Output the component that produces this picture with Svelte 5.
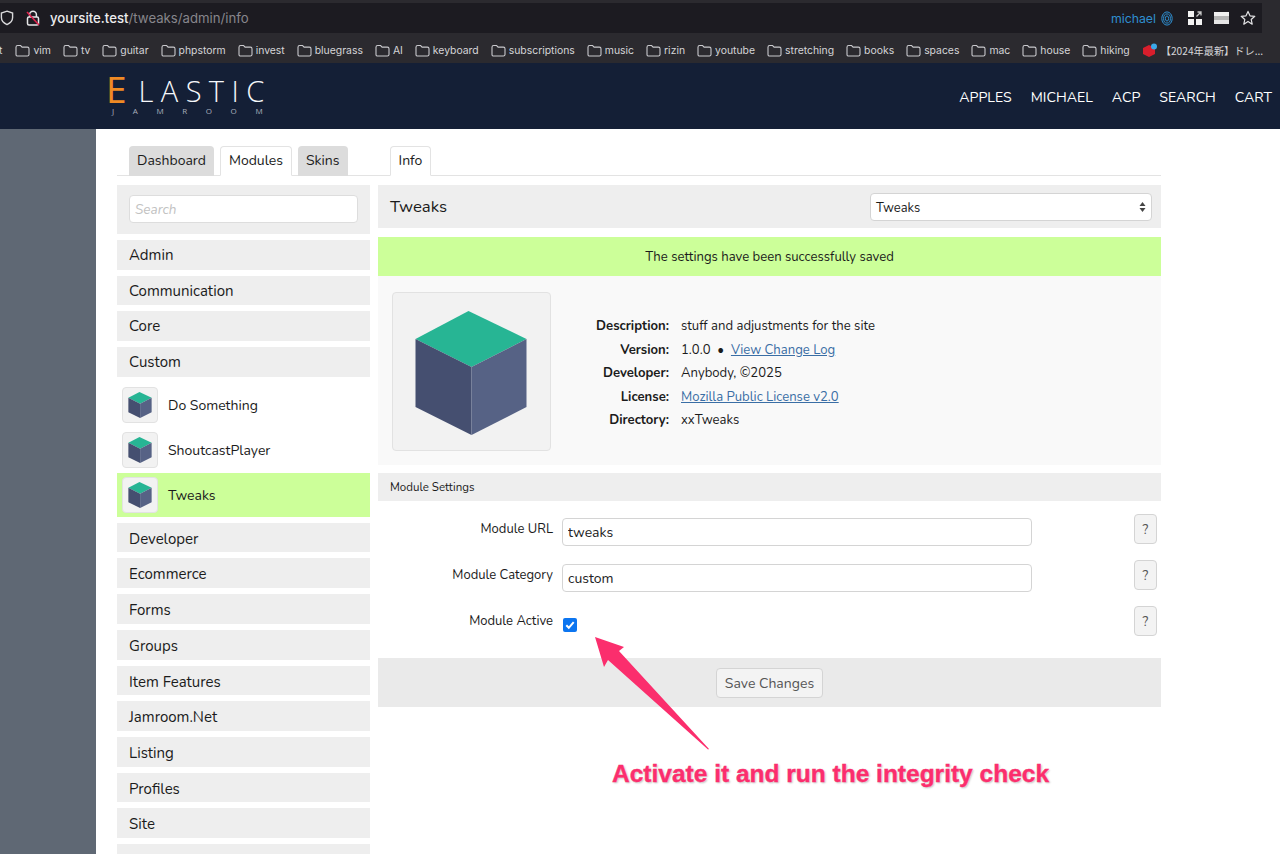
<script lang="ts">
  const bookmarks = ['vim', 'tv', 'guitar', 'phpstorm', 'invest', 'bluegrass', 'AI', 'keyboard', 'subscriptions', 'music', 'rizin', 'youtube', 'stretching', 'books', 'spaces', 'mac', 'house', 'hiking'];
  const nav = ['APPLES', 'MICHAEL', 'ACP', 'SEARCH', 'CART'];
  const groupsTop = ['Admin', 'Communication', 'Core', 'Custom'];
  const modules = [
    { label: 'Do Something', active: false },
    { label: 'ShoutcastPlayer', active: false },
    { label: 'Tweaks', active: true },
  ];
  const groupsBottom = ['Developer', 'Ecommerce', 'Forms', 'Groups', 'Item Features', 'Jamroom.Net', 'Listing', 'Profiles', 'Site', ''];
</script>

{#snippet cube(size: number)}
  <svg width={size} height={size} viewBox="0 0 111 124" aria-hidden="true">
    <polygon points="0,28 53,0 111,28 56,56" fill="#27b594" />
    <polygon points="0,28 56,56 56,124 0,96" fill="#454f70" />
    <polygon points="56,56 111,28 111,96 56,124" fill="#566285" />
  </svg>
{/snippet}

{#snippet folder()}
  <svg class="folder" width="15" height="13" viewBox="0 0 15 13" aria-hidden="true">
    <path d="M1 3.200c0-1 .6-1.700 1.600-1.700h3l1.500 1.600h5.300c1 0 1.600.6 1.600 1.600v5.700c0 1-.6 1.600-1.600 1.600H2.600c-1 0-1.600-.6-1.600-1.600z" fill="none" stroke="#c9c9cd" stroke-width="1.100" />
  </svg>
{/snippet}

<div class="page">
  <div class="addressbar">
    <div class="urlfield">
      <svg class="shield" width="14" height="16" viewBox="0 0 14 16" aria-hidden="true">
        <path d="M7 1.200 12.600 3v4.600c0 3.200-2.400 5.600-5.600 7-3.200-1.400-5.600-3.800-5.600-7V3z" fill="none" stroke="#d8d8da" stroke-width="1.400" />
      </svg>
      <svg class="lock" width="14" height="16" viewBox="0 0 14 16" aria-hidden="true">
        <path d="M3.600 7V4.600a3.400 3.400 0 0 1 6.800 0V7" fill="none" stroke="#e6e6e8" stroke-width="1.500" />
        <rect x="1.500" y="7" width="11" height="8" rx="1.500" fill="none" stroke="#e6e6e8" stroke-width="1.500" />
        <path d="M1 2 13 15" stroke="#e0224e" stroke-width="1.600" />
      </svg>
      <span class="url"><b>yoursite.test</b>/tweaks/admin/info</span>
      <span class="spacer"></span>
      <span class="ext-user">michael</span>
      <svg width="12" height="15" viewBox="0 0 12 15" aria-hidden="true" class="finger">
        <g fill="none" stroke="#2f8fd0" stroke-width="1">
          <ellipse cx="6" cy="7.500" rx="5.200" ry="6.600" />
          <ellipse cx="6" cy="7.500" rx="3.400" ry="4.600" />
          <ellipse cx="6" cy="7.500" rx="1.600" ry="2.600" />
        </g>
      </svg>
      <svg class="qr" width="14" height="14" viewBox="0 0 14 14" aria-hidden="true">
        <rect x="0" y="0" width="6" height="6" fill="#f2f2f2" />
        <rect x="0" y="8" width="6" height="6" fill="#f2f2f2" />
        <rect x="8" y="8" width="6" height="6" fill="#f2f2f2" />
        <path d="M8.500 5.500 13 1M9.500 1H13v3.500" fill="none" stroke="#c8c8c8" stroke-width="1.300" />
      </svg>
      <span class="bars"></span>
      <svg class="star" width="16" height="16" viewBox="0 0 16 16" aria-hidden="true">
        <path d="m8 1.400 2 4.400 4.800.5-3.600 3.200 1 4.700L8 11.400l-4.200 2.800 1-4.700L1.200 6.300 6 5.800z" fill="none" stroke="#e4e4e6" stroke-width="1.200" stroke-linejoin="round" />
      </svg>
    </div>
  </div>

  <div class="bookmarks">
    <span class="cut">t</span>
    {#each bookmarks as b}
      <span class="bm">{@render folder()}{b}</span>
    {/each}
    <span class="bm last">
      <svg width="15" height="15" viewBox="0 0 15 15" aria-hidden="true">
        <polygon points="1,5 7,2 13,5 13,11 7,14 1,11" fill="#d81e2c" />
        <circle cx="12" cy="3.500" r="3" fill="#3aa8e8" />
      </svg>
      <span class="jp">【2024年最新】ドレ...</span>
    </span>
  </div>

  <header class="site">
    <div class="logo">
      <div class="logo-main"><span class="e">E</span><span class="rest">LASTIC</span></div>
      <div class="logo-sub">JAMROOM</div>
    </div>
    <nav>
      {#each nav as n}<span>{n}</span>{/each}
    </nav>
  </header>

  <div class="body">
    <aside class="gutter"></aside>
    <main class="content">
      <div class="tabs">
        <div class="tabgroup">
          <span class="tab">Dashboard</span>
          <span class="tab on">Modules</span>
          <span class="tab">Skins</span>
        </div>
        <span class="tab on">Info</span>
      </div>

      <div class="columns">
        <div class="sidebar">
          <div class="searchbox"><input placeholder="Search" /></div>
          {#each groupsTop as g}<div class="cat">{g}</div>{/each}
          <div class="mods">
            {#each modules as m}
              <div class="mod" class:active={m.active}>
                <span class="thumb">{@render cube(26)}</span>
                <span class="modname">{m.label}</span>
              </div>
            {/each}
          </div>
          {#each groupsBottom as g}<div class="cat low">{g}</div>{/each}
        </div>

        <div class="panel">
          <div class="titlebar">
            <h1>Tweaks</h1>
            <div class="fakeselect">
              <span>Tweaks</span>
              <svg width="7" height="10" viewBox="0 0 7 10" aria-hidden="true">
                <path d="M3.500 0 6.500 4H.5zM3.500 10 .5 6h6z" fill="#444" />
              </svg>
            </div>
          </div>
          <div class="notice">The settings have been successfully saved</div>

          <div class="info">
            <div class="bigthumb">{@render cube(124)}</div>
            <dl>
              <dt>Description:</dt><dd>stuff and adjustments for the site</dd>
              <dt>Version:</dt><dd>1.0.0 &nbsp;•&nbsp; <a href="#log">View Change Log</a></dd>
              <dt>Developer:</dt><dd>Anybody, ©2025</dd>
              <dt>License:</dt><dd><a href="#lic">Mozilla Public License v2.0</a></dd>
              <dt>Directory:</dt><dd>xxTweaks</dd>
            </dl>
          </div>

          <div class="sectionhead">Module Settings</div>

          <form class="settings">
            <div class="row">
              <label for="url">Module URL</label>
              <input id="url" value="tweaks" />
              <button type="button" class="help">?</button>
            </div>
            <div class="row">
              <label for="cat">Module Category</label>
              <input id="cat" value="custom" />
              <button type="button" class="help">?</button>
            </div>
            <div class="row">
              <label for="act">Module Active</label>
              <span class="checkwrap">
                <span class="check">
                  <svg width="14" height="14" viewBox="0 0 14 14" aria-hidden="true">
                    <path d="M3.300 7.300 5.800 9.800 10.700 4.200" fill="none" stroke="#fff" stroke-width="2" />
                  </svg>
                </span>
              </span>
              <button type="button" class="help">?</button>
            </div>
          </form>

          <div class="savebar"><button type="button" class="save">Save Changes</button></div>
        </div>
      </div>
    </main>
  </div>

  <svg class="arrow" width="130" height="125" viewBox="0 0 130 125" aria-hidden="true">
    <path d="M0 1 29 11 24 15 114 113 113 113.500 13 24 9 31z" fill="#fb2e6d" />
  </svg>
  <div class="annotation">Activate it and run the integrity check</div>
</div>

<style>
  :global(body) {
    margin: 0;
    background: #fff;
  }
  .page {
    position: relative;
    width: 1280px;
    height: 854px;
    overflow: hidden;
    font-family: "Nunito", "Open Sans", "Liberation Sans", sans-serif;
    color: #1b1b1b;
  }

  .addressbar {
    height: 33px;
    box-sizing: border-box;
    padding-top: 3px;
    background: #2b2a2f;
  }
  .urlfield {
    height: 30px;
    display: flex;
    align-items: center;
    width: 1262px;
    padding-right: 6px;
    box-sizing: border-box;
    background: #1c1b21;
    font-family: Inter, "Liberation Sans", sans-serif;
    font-size: 13px;
  }
  .lock { margin-left: 12px; }
  .url {
    margin-left: 10px;
    color: #87868c;
    font-size: 13.2px;
  }
  .url b {
    font-weight: 500;
    color: #ececee;
  }
  .spacer { flex: 1; }
  .ext-user {
    color: #2f8fd0;
    font-size: 12.3px;
    margin-right: 1px;
  }
  .finger { margin-left: 4px; }
  .qr { margin-left: 15px; }
  .bars {
    width: 15px;
    height: 12px;
    margin-left: 12px;
    background: linear-gradient(#f0f0f0 0 4px, #b4b4b4 4px 8px, #e6e6e6 8px);
  }
  .star { margin-left: 11px; }

  .bookmarks {
    height: 30px;
    box-sizing: border-box;
    padding-top: 4px;
    display: flex;
    align-items: center;
    gap: 12px;
    background: #2b2a2f;
    color: #d5d5d8;
    font-family: Inter, "Liberation Sans", sans-serif;
    font-size: 10.4px;
    white-space: nowrap;
  }
  .cut { margin-right: 1px; margin-left: -1px; }
  .bm {
    display: flex;
    align-items: center;
    gap: 3px;
  }
  .bm.last { gap: 4px; }
  .jp {
    font-family: "Noto Sans CJK JP", Inter, sans-serif;
    font-size: 10.2px;
  }

  .site {
    height: 66px;
    display: flex;
    align-items: center;
    justify-content: space-between;
    padding: 0 8px 0 106px;
    background: #141f36;
    color: #fff;
  }
  .logo {
    margin-top: -4px;
    font-family: "Open Sans", sans-serif;
    line-height: 1;
  }
  .logo-main {
    display: flex;
    align-items: flex-end;
    height: 30px;
    font-weight: 300;
  }
  .e {
    color: #f08a24;
    font-size: 37px;
    font-weight: 400;
    line-height: 30px;
    margin-right: 12px;
  }
  .rest {
    font-size: 29px;
    line-height: 26px;
    letter-spacing: 7.4px;
    color: #f6f8fb;
  }
  .logo-sub {
    margin: 3px 0 0 6px;
    font-size: 8px;
    letter-spacing: 18.6px;
    color: #a8aebb;
  }
  nav {
    display: flex;
    gap: 19px;
    font-size: 14.1px;
    margin-top: 2px;
  }

  .body {
    display: flex;
    height: 725px;
  }
  .gutter {
    width: 96px;
    flex: none;
    background: #5f6874;
  }
  .content {
    width: 1044px;
    margin-left: 21px;
  }
  .tabs {
    display: flex;
    height: 46px;
    padding-left: 12px;
    align-items: flex-end;
    border-bottom: 1px solid #e3e3e3;
  }
  .tabgroup {
    display: flex;
    gap: 6px;
    margin-right: 42px;
  }
  .tab {
    display: block;
    height: 30px;
    box-sizing: border-box;
    padding: 5px 8px 0;
    margin-bottom: -1px;
    border-radius: 4px 4px 0 0;
    background: #dcdcdc;
    font-size: 14px;
  }
  .tab.on {
    background: #fff;
    border: 1px solid #e3e3e3;
    border-bottom: 1px solid #fff;
    padding-top: 4px;
  }

  .columns {
    display: flex;
    gap: 8px;
    padding-top: 9px;
  }
  .sidebar {
    width: 253px;
    flex: none;
    display: flex;
    flex-direction: column;
    gap: 6px;
  }
  .searchbox {
    height: 49px;
    box-sizing: border-box;
    padding: 10px 12px;
    background: #eee;
  }
  .searchbox input {
    width: 100%;
    height: 28px;
    box-sizing: border-box;
    padding: 0 5px;
    border: 1px solid #ddd;
    border-radius: 4px;
    background: #fff;
    font-family: inherit;
    font-size: 13.5px;
    font-style: italic;
    outline: none;
  }
  .searchbox input::placeholder { color: #c2c2c2; }
  .cat {
    height: 29.7px;
    box-sizing: border-box;
    padding: 1px 0 0 12px;
    line-height: 29.7px;
    background: #eee;
    font-size: 15px;
    flex: none;
  }
  .cat.low { padding-top: 2px; }
  .mods {
    display: flex;
    flex-direction: column;
  }
  .mod {
    height: 45px;
    display: flex;
    align-items: center;
    gap: 10px;
    padding-left: 5px;
    font-size: 14px;
  }
  .mod.active {
    height: 44px;
    background: #ccff99;
  }
  .mod.active .modname { margin-top: 2px; }
  .thumb {
    width: 36px;
    height: 36px;
    box-sizing: border-box;
    display: flex;
    align-items: center;
    justify-content: center;
    border: 1px solid #e2e2e2;
    border-radius: 4px;
    background: #f2f2f2;
  }

  .panel {
    width: 783px;
    flex: none;
  }
  .titlebar {
    height: 43px;
    display: flex;
    align-items: center;
    justify-content: space-between;
    padding: 0 9px 0 12px;
    background: #eee;
  }
  h1 {
    margin: 0;
    font-size: 16.8px;
    font-weight: 400;
  }
  .fakeselect {
    width: 282px;
    height: 28px;
    box-sizing: border-box;
    display: flex;
    align-items: center;
    justify-content: space-between;
    padding: 0 5px;
    border: 1px solid #d4d4d4;
    border-radius: 4px;
    background: #fff;
    font-size: 13px;
  }
  .fakeselect span { margin-top: 2px; }
  .notice {
    height: 38.5px;
    box-sizing: border-box;
    padding-top: 2px;
    margin-top: 9px;
    display: flex;
    align-items: center;
    justify-content: center;
    background: #ccff99;
    font-size: 13.1px;
  }
  .info {
    height: 189px;
    display: flex;
    align-items: center;
    padding-left: 14px;
    background: #f9f9f9;
  }
  .bigthumb {
    width: 159px;
    height: 159px;
    margin-top: 3px;
    padding: 2px 2px 0 0;
    box-sizing: border-box;
    display: flex;
    align-items: center;
    justify-content: center;
    border: 1px solid #e2e2e2;
    border-radius: 4px;
    background: #f2f2f2;
  }
  dl {
    display: grid;
    grid-template-columns: 118px auto;
    column-gap: 12px;
    margin: 8px 0 0;
    font-size: 13.1px;
    line-height: 23.5px;
  }
  dt {
    text-align: right;
    font-weight: 700;
  }
  dd { margin: 0; }
  a { color: #3a6ea5; }

  .sectionhead {
    height: 28px;
    line-height: 28px;
    margin-top: 8.5px;
    padding-left: 12px;
    background: #eee;
    font-size: 11.5px;
  }
  .settings {
    display: flex;
    flex-direction: column;
    padding-top: 16px;
    height: 157px;
    box-sizing: border-box;
  }
  .row {
    height: 46px;
    display: flex;
    align-items: flex-start;
    flex: none;
  }
  .row label {
    width: 175px;
    text-align: right;
    font-size: 13px;
    margin-top: 3px;
  }
  .row input {
    width: 470px;
    height: 28px;
    box-sizing: border-box;
    margin: 1px 0 0 9px;
    padding: 0 5px;
    border: 1px solid #d4d4d4;
    border-radius: 4px;
    font-family: inherit;
    font-size: 14px;
    color: #222;
    outline: none;
  }
  .checkwrap {
    width: 469px;
    margin: 9px 0 0 10px;
  }
  .check {
    width: 14px;
    height: 14px;
    display: block;
    border-radius: 2px;
    background: #0c75f0;
  }
  .check svg { display: block; }
  .help {
    width: 23px;
    height: 30px;
    margin: -3px 0 0 102px;
    padding: 2px 0 0;
    border: 1px solid #d4d4d4;
    border-radius: 4px;
    background: #f3f3f3;
    color: #555;
    font-family: inherit;
    font-size: 13px;
  }
  .savebar {
    height: 49px;
    display: flex;
    align-items: center;
    justify-content: center;
    background: #eaeaea;
  }
  .save {
    width: 107px;
    height: 30px;
    padding: 2px 0 0;
    border: 1px solid #d4d4d4;
    border-radius: 4px;
    background: #f3f3f3;
    color: #555;
    font-family: inherit;
    font-size: 14px;
  }

  .arrow {
    position: absolute;
    left: 595px;
    top: 636px;
  }
  .annotation {
    position: absolute;
    left: 612px;
    top: 760px;
    font-family: "Liberation Sans", Arial, sans-serif;
    font-size: 24.5px;
    font-weight: 700;
    color: #fb2e6d;
    white-space: nowrap;
    -webkit-text-stroke: 0.4px #fb2e6d;
    text-shadow: 0 0 2px #fff, 1px 1px 2px rgba(0, 0, 0, 0.3);
  }
</style>
